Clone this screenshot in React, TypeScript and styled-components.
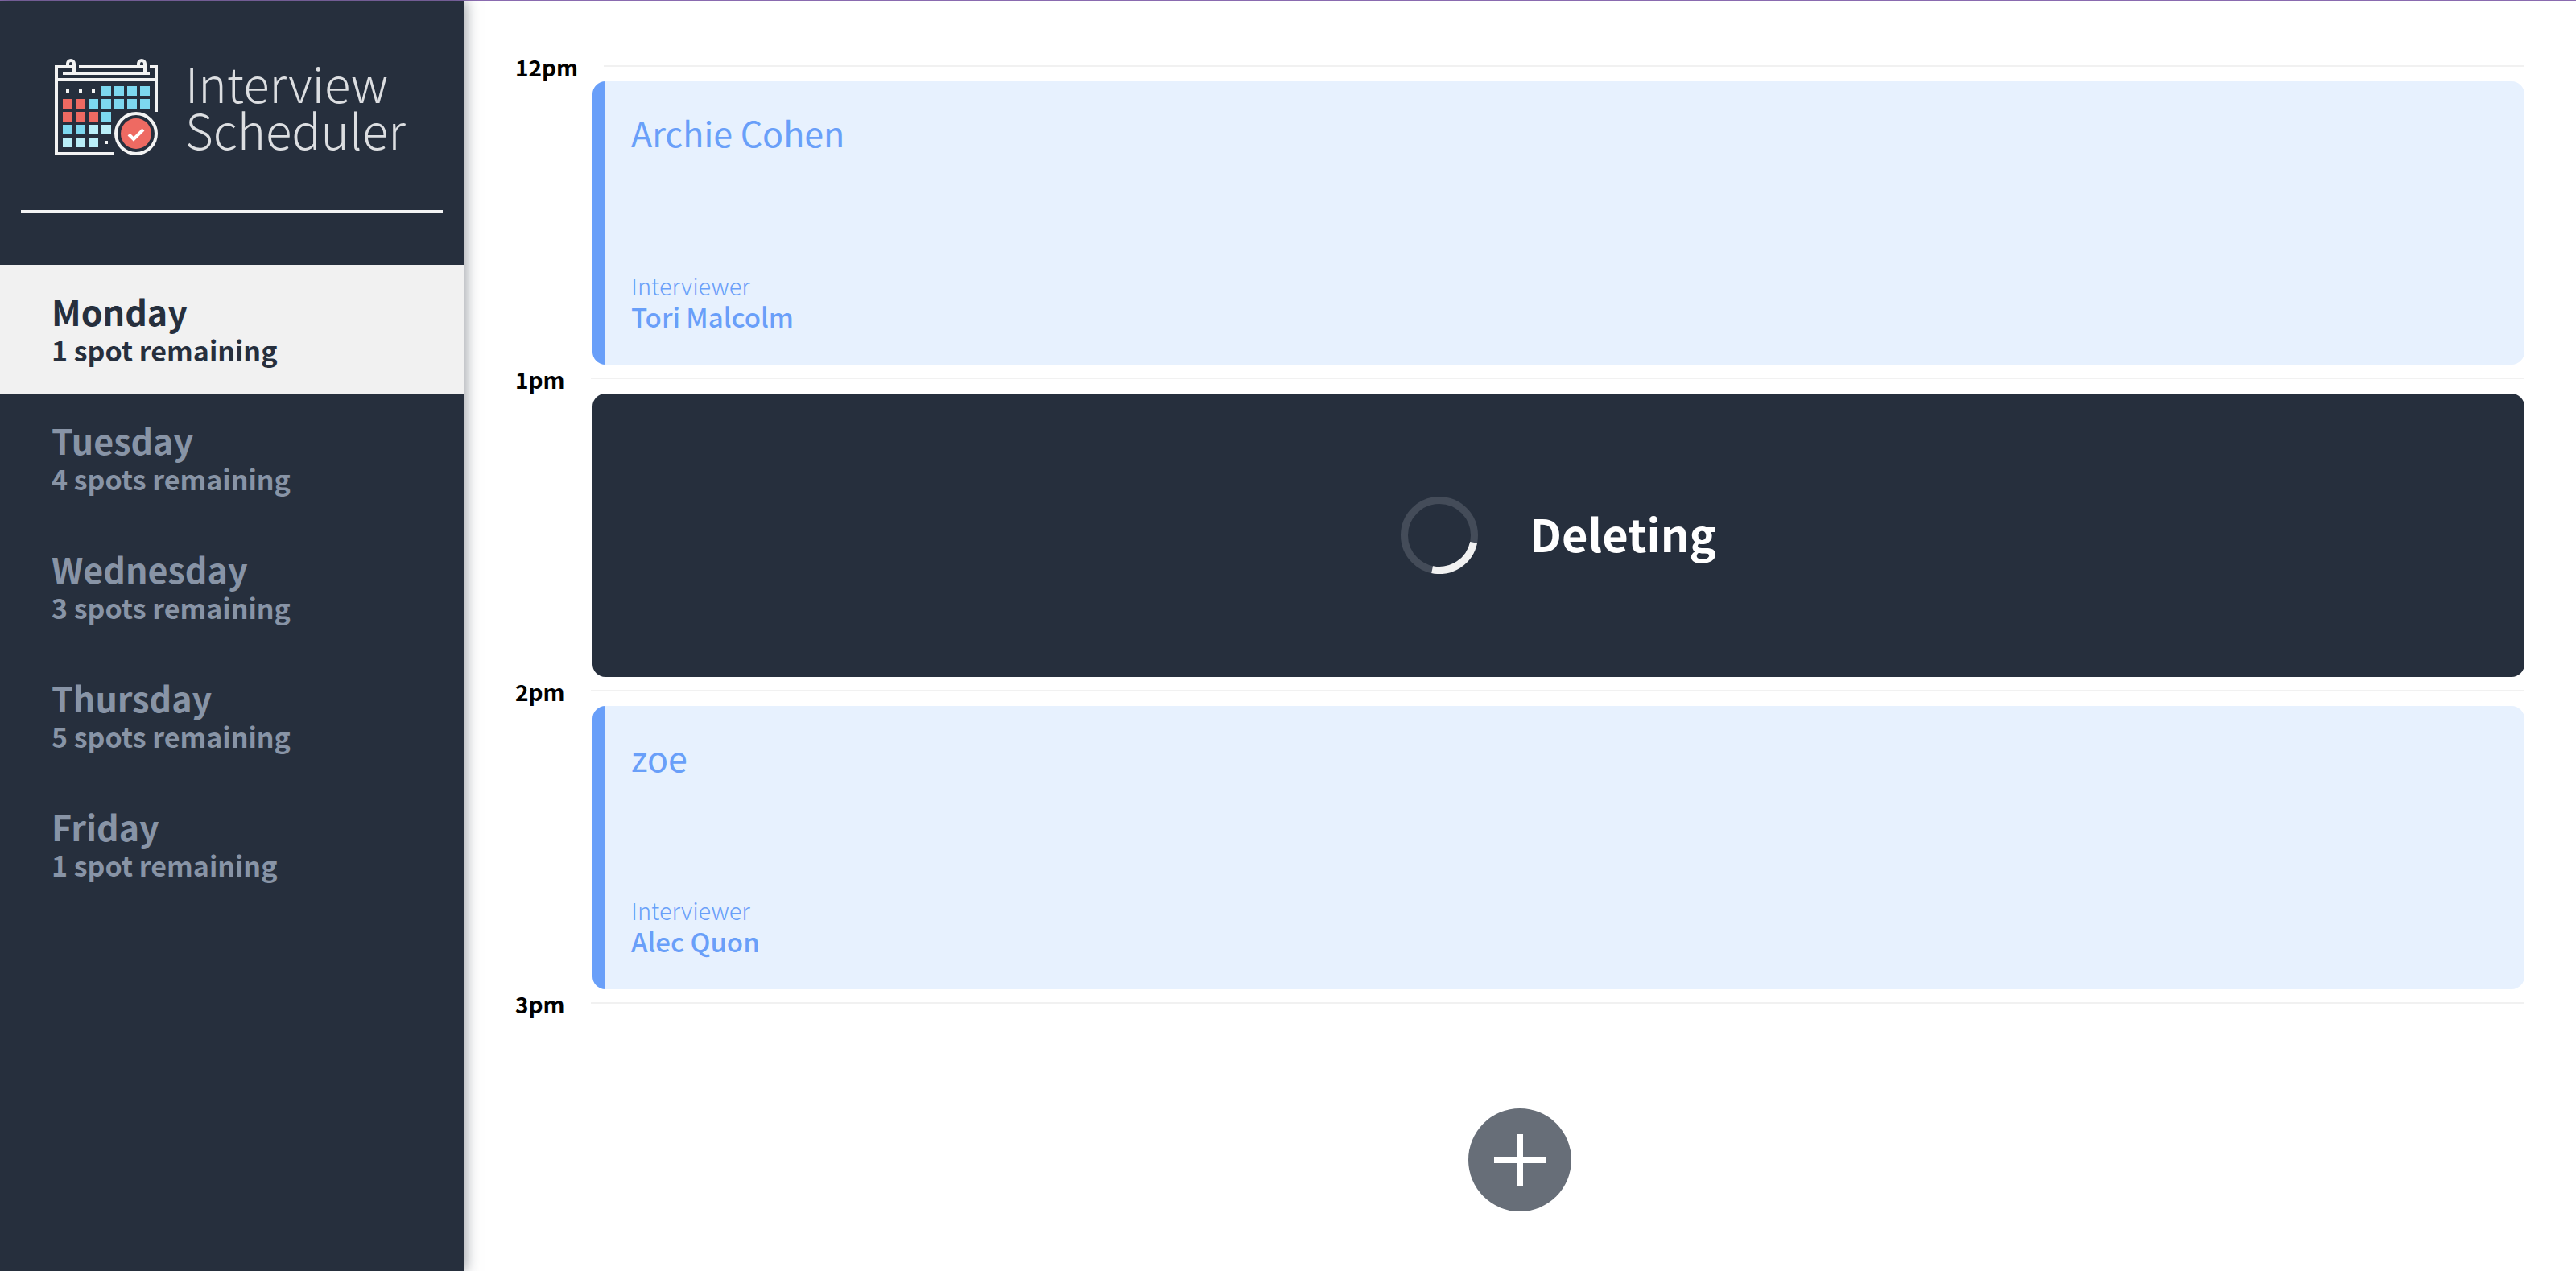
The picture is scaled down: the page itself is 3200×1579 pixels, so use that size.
import React, { useState } from "react";
import styled, { createGlobalStyle } from "styled-components";

const NAVY = "#262f3d";
const BLUE = "#699ff9";
const LIGHT = "#f1f1f1";

const GlobalStyle = createGlobalStyle`
  *, *::before, *::after { box-sizing: border-box; }
  body {
    margin: 0;
    background: #fff;
    color: #000;
    font-family: "Source Sans Pro", "Noto Sans CJK SC", "Noto Sans", sans-serif;
  }
  h1, h2, h3, h4, p, ul { margin: 0; padding: 0; }
`;

const Layout = styled.div`
  display: flex;
  height: 100vh;
  border-top: 1px solid #8a6bb0;
`;

const Sidebar = styled.aside`
  display: flex;
  flex-direction: column;
  width: 18%;
  min-width: 576px;
  background: ${NAVY};
  box-shadow: 2px 0 16px rgba(38, 47, 61, 0.5);
  z-index: 1;
`;

const Brand = styled.a`
  display: flex;
  align-items: center;
  gap: 34px;
  padding: 72px 0 68px 68px;
  color: #dcdee1;
  text-decoration: none;
`;

const BrandName = styled.span`
  padding-bottom: 4px;
  font-size: 60px;
  font-weight: 200;
  line-height: 58px;
`;

const Separator = styled.hr`
  width: auto;
  height: 4px;
  margin: 0 26px 64px;
  border: 0;
  background: #f3f4f4;
`;

const DayList = styled.ul`
  list-style: none;
`;

const DayButton = styled.button<{ $selected: boolean }>`
  display: block;
  width: 100%;
  padding: 32px 64px 30px;
  border: 0;
  background: ${(p) => (p.$selected ? LIGHT : "transparent")};
  color: ${(p) => (p.$selected ? NAVY : "#8894a6")};
  font-family: inherit;
  font-weight: 700;
  text-align: left;
  cursor: pointer;
`;

const DayName = styled.span`
  display: block;
  font-size: 43px;
  line-height: 50px;
`;

const DaySpots = styled.span`
  display: block;
  font-size: 34px;
  line-height: 48px;
`;

const Schedule = styled.main`
  flex: 1;
  min-width: 0;
  padding: 64px;
  overflow-y: auto;
  scrollbar-width: none;
`;

const SlotHeader = styled.header`
  display: flex;
  align-items: center;
  gap: 32px;
  height: 36px;
  padding-bottom: 2px;
`;

const SlotTime = styled.h4`
  padding-top: 2px;
  font-size: 28px;
  font-weight: 700;
  line-height: 32px;
`;

const SlotLine = styled.hr`
  flex: 1;
  height: 2px;
  margin: 0;
  border: 0;
  background: ${LIGHT};
`;

const Card = styled.section`
  display: flex;
  height: 352px;
  margin-left: 96px;
  border-radius: 16px;
`;

const Booking = styled(Card)`
  flex-direction: column;
  justify-content: space-between;
  padding: 32px 32px 38px;
  border-left: 16px solid ${BLUE};
  background: #e7f1fe;
  color: ${BLUE};
`;

const Student = styled.h2`
  font-size: 43px;
  font-weight: 400;
  line-height: 62px;
`;

const InterviewerLabel = styled.h4`
  font-size: 29px;
  font-weight: 300;
  line-height: 34px;
`;

const InterviewerName = styled.h3`
  font-size: 33px;
  font-weight: 500;
  line-height: 44px;
`;

const Status = styled(Card)`
  align-items: center;
  justify-content: center;
  gap: 64px;
  background: ${NAVY};
  color: #fff;
`;

const StatusText = styled.h1`
  padding-bottom: 6px;
  font-size: 56px;
  font-weight: 700;
  line-height: 80px;
`;

const EmptySlot = styled.section`
  display: flex;
  align-items: center;
  justify-content: center;
  height: 352px;
`;

const AddButton = styled.button`
  display: block;
  width: 128px;
  height: 128px;
  padding: 0;
  border: 0;
  border-radius: 50%;
  background: #676e78;
  cursor: pointer;

  svg { display: block; }
`;

const DAYS = [
  { name: "Monday", spots: 1 },
  { name: "Tuesday", spots: 4 },
  { name: "Wednesday", spots: 3 },
  { name: "Thursday", spots: 5 },
  { name: "Friday", spots: 1 },
];

type Slot =
  | { time: string; kind: "booked"; student: string; interviewer: string }
  | { time: string; kind: "status"; message: string }
  | { time: string; kind: "empty" };

const SLOTS: Slot[] = [
  { time: "12pm", kind: "booked", student: "Archie Cohen", interviewer: "Tori Malcolm" },
  { time: "1pm", kind: "status", message: "Deleting" },
  { time: "2pm", kind: "booked", student: "zoe", interviewer: "Alec Quon" },
  { time: "3pm", kind: "empty" },
];

// One letter per calendar cell: d = dot, b = blue, r = red, p = pale blue.
const CALENDAR = ["dddbbbb", "rrbbbbb", "rrrb", "bbpp", "pppd"];
const CELL_COLORS: Record<string, string> = { b: "#7dd8ef", r: "#ee6a62", p: "#b9eef8" };

function CalendarLogo() {
  return (
    <svg width="128" height="120" viewBox="0 0 128 120" fill="none" aria-hidden="true">
      <g stroke="#f3f3f3" strokeWidth="4">
        <path d="M126 66V10H118M74 118H2V10H24" />
        <path d="M30 10H110M10 18H118M2 26H126" />
        <path d="M16 10V6a4 4 0 0 1 8 0V17M104 10V6a4 4 0 0 1 8 0V17" />
        <circle cx="101" cy="93" r="25" />
      </g>
      {CALENDAR.map((row, r) =>
        row.split("").map((cell, c) =>
          cell === "d" ? (
            <rect key={`${r}-${c}`} x={14 + c * 16} y={38 + r * 16} width="4" height="4" fill="#f3f3f3" />
          ) : (
            <rect key={`${r}-${c}`} x={10 + c * 16} y={34 + r * 16} width="12" height="12" fill={CELL_COLORS[cell]} />
          )
        )
      )}
      <circle cx="101" cy="93" r="19" fill="#ee6a62" />
      <path d="M92 94l6 6 12-12" stroke="#fff" strokeWidth="4" />
    </svg>
  );
}

function Spinner() {
  return (
    <svg width="96" height="96" viewBox="0 0 96 96" fill="none" role="img" aria-label="Loading">
      <circle cx="48" cy="48" r="43.5" stroke="#444c59" strokeWidth="9" />
      <path d="M90.6 56.8A43.5 43.5 0 0 1 39.1 90.6" stroke="#f1f1f1" strokeWidth="9" />
    </svg>
  );
}

function SlotBody({ slot }: { slot: Slot }) {
  if (slot.kind === "booked") {
    return (
      <Booking>
        <Student>{slot.student}</Student>
        <div>
          <InterviewerLabel>Interviewer</InterviewerLabel>
          <InterviewerName>{slot.interviewer}</InterviewerName>
        </div>
      </Booking>
    );
  }
  if (slot.kind === "status") {
    return (
      <Status>
        <Spinner />
        <StatusText>{slot.message}</StatusText>
      </Status>
    );
  }
  return (
    <EmptySlot>
      <AddButton type="button" aria-label="Add appointment">
        <svg width="128" height="128" viewBox="0 0 128 128" aria-hidden="true">
          <path d="M64 32V96M32 64H96" stroke="#fff" strokeWidth="8" />
        </svg>
      </AddButton>
    </EmptySlot>
  );
}

export default function App() {
  const [day, setDay] = useState("Monday");
  return (
    <>
      <GlobalStyle />
      <Layout>
        <Sidebar>
          <Brand href="#">
            <CalendarLogo />
            <BrandName>
              Interview
              <br />
              Scheduler
            </BrandName>
          </Brand>
          <Separator />
          <nav>
            <DayList>
              {DAYS.map(({ name, spots }) => (
                <li key={name}>
                  <DayButton type="button" $selected={name === day} onClick={() => setDay(name)}>
                    <DayName>{name}</DayName>
                    <DaySpots>
                      {`${spots} ${spots === 1 ? "spot" : "spots"} remaining`}
                    </DaySpots>
                  </DayButton>
                </li>
              ))}
            </DayList>
          </nav>
        </Sidebar>
        <Schedule>
          {SLOTS.map((slot) => (
            <article key={slot.time}>
              <SlotHeader>
                <SlotTime>{slot.time}</SlotTime>
                <SlotLine />
              </SlotHeader>
              <SlotBody slot={slot} />
            </article>
          ))}
        </Schedule>
      </Layout>
    </>
  );
}
